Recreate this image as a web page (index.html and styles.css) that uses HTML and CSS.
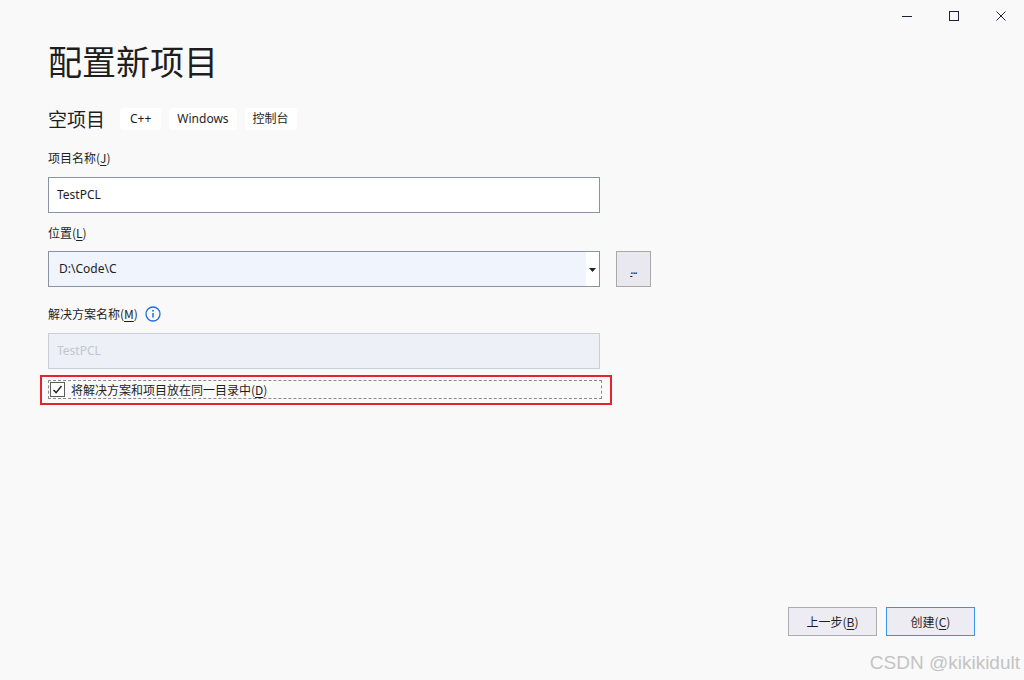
FILE: index.html
```html
<!DOCTYPE html>
<html lang="zh-CN">
<head>
<meta charset="utf-8">
<title>配置新项目</title>
<link rel="stylesheet" href="styles.css">
</head>
<body>
<div class="window">
  <div class="titlebar">
    <span class="ctl"><svg width="12" height="12" viewBox="0 0 12 12"><path d="M1 6.5h10" stroke="#1b2333" stroke-width="1"/></svg></span>
    <span class="ctl"><svg width="12" height="12" viewBox="0 0 12 12"><rect x="1.5" y="1.5" width="9" height="9" fill="none" stroke="#1b2333" stroke-width="1"/></svg></span>
    <span class="ctl"><svg width="12" height="12" viewBox="0 0 12 12"><path d="M1.5 1.5l9 9M10.5 1.5l-9 9" stroke="#1b2333" stroke-width="1"/></svg></span>
  </div>
  <div class="content">
    <h1 class="title">配置新项目</h1>
    <div class="subtitle-row">
      <span class="subtitle">空项目</span>
      <span class="tag">C++</span>
      <span class="tag">Windows</span>
      <span class="tag">控制台</span>
    </div>

    <div class="label l1">项目名称(<u>J</u>)</div>
    <div class="input">TestPCL</div>

    <div class="label l2">位置(<u>L</u>)</div>
    <div class="loc-row">
      <div class="input combo">
        <span class="combo-text">D:\Code\C</span>
        <span class="combo-btn"><svg width="7" height="4" viewBox="0 0 7 4"><path d="M0 0h7L3.5 4z" fill="#1b2333"/></svg></span>
      </div>
      <div class="browse"><span><u>.</u>..</span></div>
    </div>

    <div class="label l3">解决方案名称(<u>M</u>)
      <svg class="info" width="16" height="16" viewBox="0 0 16 16"><circle cx="8" cy="8" r="7" fill="none" stroke="#1f6fd6" stroke-width="1.3"/><circle cx="8" cy="4.8" r="0.95" fill="#1f6fd6"/><path d="M8 7v4.6" stroke="#1f6fd6" stroke-width="1.5"/></svg>
    </div>
    <div class="input disabled">TestPCL</div>

    <div class="highlight">
      <div class="focus">
        <span class="checkbox"><svg width="11" height="11" viewBox="0 0 11 11"><path d="M1.5 6l2.6 2.6L9.5 2" fill="none" stroke="#222" stroke-width="1.4"/></svg></span>
        <span class="cb-label">将解决方案和项目放在同一目录中(<u>D</u>)</span>
      </div>
    </div>
  </div>
  <div class="footer">
    <button class="btn">上一步(<u>B</u>)</button>
    <button class="btn primary">创建(<u>C</u>)</button>
  </div>
  <div class="watermark">CSDN @kikikidult</div>
</div>
</body>
</html>
```

FILE: styles.css
```css
* { box-sizing: border-box; }
html, body { margin: 0; padding: 0; }
body {
  background: #f9f9f9;
  font-family: "Segoe UI", "Noto Sans", "Noto Sans CJK SC", sans-serif;
  color: #1e1e1e;
}
u { text-decoration: underline; text-underline-offset: 2px; }
.window {
  position: relative;
  width: 1024px;
  height: 680px;
  display: flex;
  flex-direction: column;
}
.titlebar {
  height: 32px;
  display: flex;
  justify-content: flex-end;
  align-items: center;
  padding-right: 0;
}
.ctl {
  width: 47px;
  height: 32px;
  display: flex;
  align-items: center;
  justify-content: center;
}
.ctl svg { display: block; }
.content {
  padding-left: 48px;
  display: flex;
  flex-direction: column;
}
.title {
  margin: 8px 0 0 0;
  font-family: "Noto Sans CJK SC", sans-serif;
  font-weight: 400;
  font-size: 34px;
  line-height: 42px;
  height: 42px;
  color: #1e1e1e;
}
.subtitle-row {
  margin-top: 25px;
  display: flex;
  align-items: center;
  height: 24px;
}
.subtitle {
  font-family: "Noto Sans CJK SC", sans-serif;
  font-size: 19px;
  line-height: 24px;
  margin-right: 15px;
}
.tag {
  background: #ffffff;
  border-radius: 4px;
  height: 22px;
  line-height: 22px;
  font-size: 12px;
  padding: 0 8px;
  margin-right: 8px;
  color: #1e1e1e;
}
.tag:nth-child(2) { padding: 0 10px; }
.label {
  font-family: "Noto Sans CJK SC", sans-serif;
  font-size: 12px;
  line-height: 16px;
  height: 16px;
  display: flex;
  align-items: center;
}
.l1 { margin-top: 19px; }
.l2 { margin-top: 12px; }
.l3 { margin-top: 19px; }
.info { margin-left: 7px; }
.input {
  margin-top: 11px;
  width: 552px;
  height: 36px;
  border: 1px solid #8a93a6;
  background: #ffffff;
  font-size: 12px;
  line-height: 34px;
  padding-left: 8px;
  font-family: "Segoe UI", "Noto Sans", "Noto Sans CJK SC", sans-serif;
}
.loc-row {
  display: flex;
  align-items: flex-start;
  margin-top: 10px;
}
.combo {
  margin-top: 0;
  display: flex;
  padding-left: 0;
  background: #f0f4fd;
}
.combo-text {
  flex: 1;
  padding-left: 10px;
}
.combo-btn {
  width: 13px;
  background: #ffffff;
  display: flex;
  align-items: center;
  justify-content: flex-start;
}
.combo-btn svg { display: block; margin-left: 3px; margin-top: 1px; }
.browse {
  margin-left: 16px;
  width: 35px;
  height: 36px;
  background: #e8e8ee;
  border: 1px solid #a8a8a8;
  font-size: 12px;
  display: flex;
  align-items: center;
  justify-content: center;
  padding-top: 2px;
}
.browse span { letter-spacing: -1px; line-height: 12px; }
.disabled {
  background: #edf0f6;
  border-color: #c9ced8;
  color: #c2c6cd;
}
.highlight {
  margin-top: 6px;
  margin-left: -8px;
  width: 572px;
  height: 30px;
  border: 2px solid #e5232c;
  padding: 3px 0 0 6px;
}
.focus {
  width: 554px;
  height: 19px;
  border: 1px dashed #8a8a8a;
  display: flex;
  align-items: center;
}
.checkbox {
  width: 15px;
  height: 15px;
  border: 1px solid #5c5c5c;
  background: #ffffff;
  display: flex;
  align-items: center;
  justify-content: center;
  margin-left: 1px;
}
.checkbox svg { display: block; }
.cb-label {
  margin-left: 6px;
  font-family: "Noto Sans CJK SC", sans-serif;
  font-size: 12px;
  line-height: 16px;
}
.footer {
  margin-top: auto;
  display: flex;
  justify-content: flex-end;
  gap: 9px;
  padding-right: 49px;
  padding-bottom: 44px;
}
.btn {
  width: 89px;
  height: 29px;
  background: #ececf2;
  border: 1px solid #adadad;
  font-family: "Noto Sans CJK SC", sans-serif;
  font-size: 12px;
  color: #1e1e1e;
  padding: 0;
}
.primary {
  border: 1px solid #3c93ef;
}
.watermark {
  position: absolute;
  right: 4px;
  bottom: 6px;
  font-family: "Liberation Sans", Arial, sans-serif;
  font-size: 19px;
  color: #c4c4c4;
}
```
